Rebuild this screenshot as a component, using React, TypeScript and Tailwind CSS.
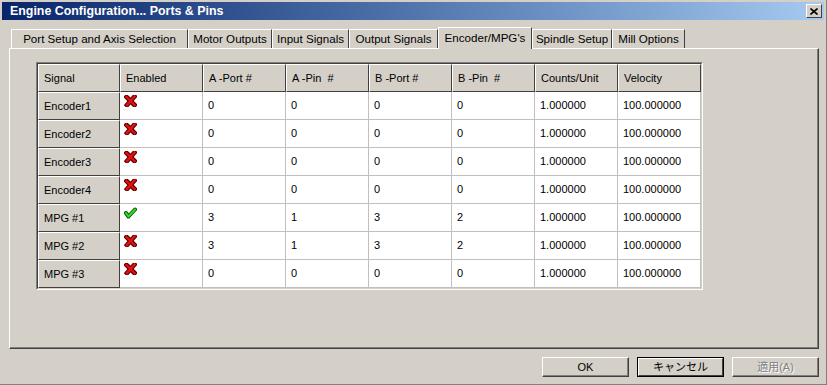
import React from 'react'

const tabs = [
  { label: 'Port Setup and Axis Selection', w: 'w-[177px]' },
  { label: 'Motor Outputs', w: 'w-[84px]' },
  { label: 'Input Signals', w: 'w-[77px]' },
  { label: 'Output Signals', w: 'w-[89px]' },
  { label: "Encoder/MPG's", w: 'w-[94px]', active: true },
  { label: 'Spindle Setup', w: 'w-[80px]' },
  { label: 'Mill Options', w: 'w-[73px]' },
]

const headers = ['Signal', 'Enabled', 'A -Port #', 'A -Pin  #', 'B -Port #', 'B -Pin  #', 'Counts/Unit', 'Velocity']

const rows = [
  { name: 'Encoder1', on: false, ap: '0', apin: '0', bp: '0', bpin: '0' },
  { name: 'Encoder2', on: false, ap: '0', apin: '0', bp: '0', bpin: '0' },
  { name: 'Encoder3', on: false, ap: '0', apin: '0', bp: '0', bpin: '0' },
  { name: 'Encoder4', on: false, ap: '0', apin: '0', bp: '0', bpin: '0' },
  { name: 'MPG #1', on: true, ap: '3', apin: '1', bp: '3', bpin: '2' },
  { name: 'MPG #2', on: false, ap: '3', apin: '1', bp: '3', bpin: '2' },
  { name: 'MPG #3', on: false, ap: '0', apin: '0', bp: '0', bpin: '0' },
]

const RedX = () => (
  <svg width="13" height="12" viewBox="0 0 13 12">
    <path d="M2.5 2 L10.5 10 M10.5 1.5 L3 10" stroke="#5a0000" strokeWidth="4.6" strokeLinecap="square" fill="none" />
    <path d="M2.5 2 L10.5 10 M10.5 1.5 L3 10" stroke="#e41010" strokeWidth="2.4" strokeLinecap="square" fill="none" />
  </svg>
)

const GreenCheck = () => (
  <svg width="13" height="12" viewBox="0 0 13 12">
    <path d="M2 6 L4.5 9.5 L11 2.5" stroke="#0a5a0a" strokeWidth="4" strokeLinecap="round" strokeLinejoin="round" fill="none" />
    <path d="M2 6 L4.5 9.5 L11 2.5" stroke="#30dc30" strokeWidth="2" strokeLinecap="round" strokeLinejoin="round" fill="none" />
  </svg>
)

const headCell = 'flex items-center px-[5px] h-[28px] bg-[#d4d0c8] border-t border-l border-white border-r border-b border-r-[#404040] border-b-[#404040]'
const dataCell = 'flex items-center px-[5px] h-[28px] bg-white border-r border-b border-[#c0c0c0]'

const App = () => {
  return (
    <div className="w-[827px] h-[385px] bg-[#d4d0c8] border-b border-r border-[#808080] px-[2px] pt-[2px] font-['Liberation_Sans',sans-serif] text-[11px] text-black overflow-hidden">
      <div className="h-[18px] flex items-center justify-between pl-[8px] pr-[2px] bg-gradient-to-r from-[#0a246a] to-[#a6caf0]">
        <span className="text-white font-bold text-[12.4px]">Engine Configuration... Ports &amp; Pins</span>
        <div className="w-[16px] h-[14px] flex items-center justify-center bg-[#d4d0c8] border-t border-l border-white border-r border-b border-r-[#404040] border-b-[#404040]">
          <svg width="8" height="7" viewBox="0 0 8 7">
            <path d="M0.5 0.5 L7.5 6.5 M7.5 0.5 L0.5 6.5" stroke="#000" strokeWidth="1.6" />
          </svg>
        </div>
      </div>

      <div className="mt-[7px] ml-[9px] h-[21px] flex items-end text-[11.6px]">
        {tabs.map((t) => (
          <div
            key={t.label}
            className={`${t.w} flex items-center justify-center border-t border-l border-white border-r border-r-[#404040] bg-[#d4d0c8] ${
              t.active ? 'h-[22px] -mb-[1px] relative z-10 pb-[2px]' : 'h-[19px]'
            }`}
          >
            {t.label}
          </div>
        ))}
      </div>

      <div className="ml-[7px] w-[810px] h-[301px] border-t border-l border-white border-r border-b border-r-[#404040] border-b-[#404040] shadow-[inset_-1px_-1px_0_#808080] pt-[13px] pl-[26px]">
        <div className="w-fit border-t border-l border-[#808080] border-r border-b border-r-white border-b-white">
          <div className="border-t border-l border-[#404040] border-r border-b border-r-[#d4d0c8] border-b-[#d4d0c8]">
            <div className="grid grid-cols-[82px_repeat(7,83px)]">
              {headers.map((h) => (
                <div key={h} className={headCell}>
                  <span className="whitespace-pre">{h}</span>
                </div>
              ))}
              {rows.map((r) => (
                <React.Fragment key={r.name}>
                  <div className={headCell}>{r.name}</div>
                  <div className="h-[28px] bg-white border-r border-b border-[#c0c0c0] pl-[4px] pt-[3px]">
                    {r.on ? <GreenCheck /> : <RedX />}
                  </div>
                  <div className={dataCell}>{r.ap}</div>
                  <div className={dataCell}>{r.apin}</div>
                  <div className={dataCell}>{r.bp}</div>
                  <div className={dataCell}>{r.bpin}</div>
                  <div className={dataCell}>1.000000</div>
                  <div className={dataCell}>100.000000</div>
                </React.Fragment>
              ))}
            </div>
          </div>
        </div>
      </div>

      <div className="mt-[8px] pr-[5px] flex justify-end gap-[8px] font-['Liberation_Sans','Noto_Sans_CJK_JP',sans-serif]">
        <div className="w-[87px] h-[20px] flex items-center justify-center border-t border-l border-white border-r border-b border-r-[#404040] border-b-[#404040] shadow-[inset_-1px_-1px_0_#808080]">
          OK
        </div>
        <div className="w-[87px] h-[20px] border border-black">
          <div className="h-full flex items-center justify-center border-t border-l border-white border-r border-b border-r-[#404040] border-b-[#404040]">
            キャンセル
          </div>
        </div>
        <div className="w-[87px] h-[20px] flex items-center justify-center text-[#808080] [text-shadow:1px_1px_0_#fff] border-t border-l border-white border-r border-b border-r-[#404040] border-b-[#404040] shadow-[inset_-1px_-1px_0_#808080]">
          適用(A)
        </div>
      </div>
    </div>
  )
}

export default App
